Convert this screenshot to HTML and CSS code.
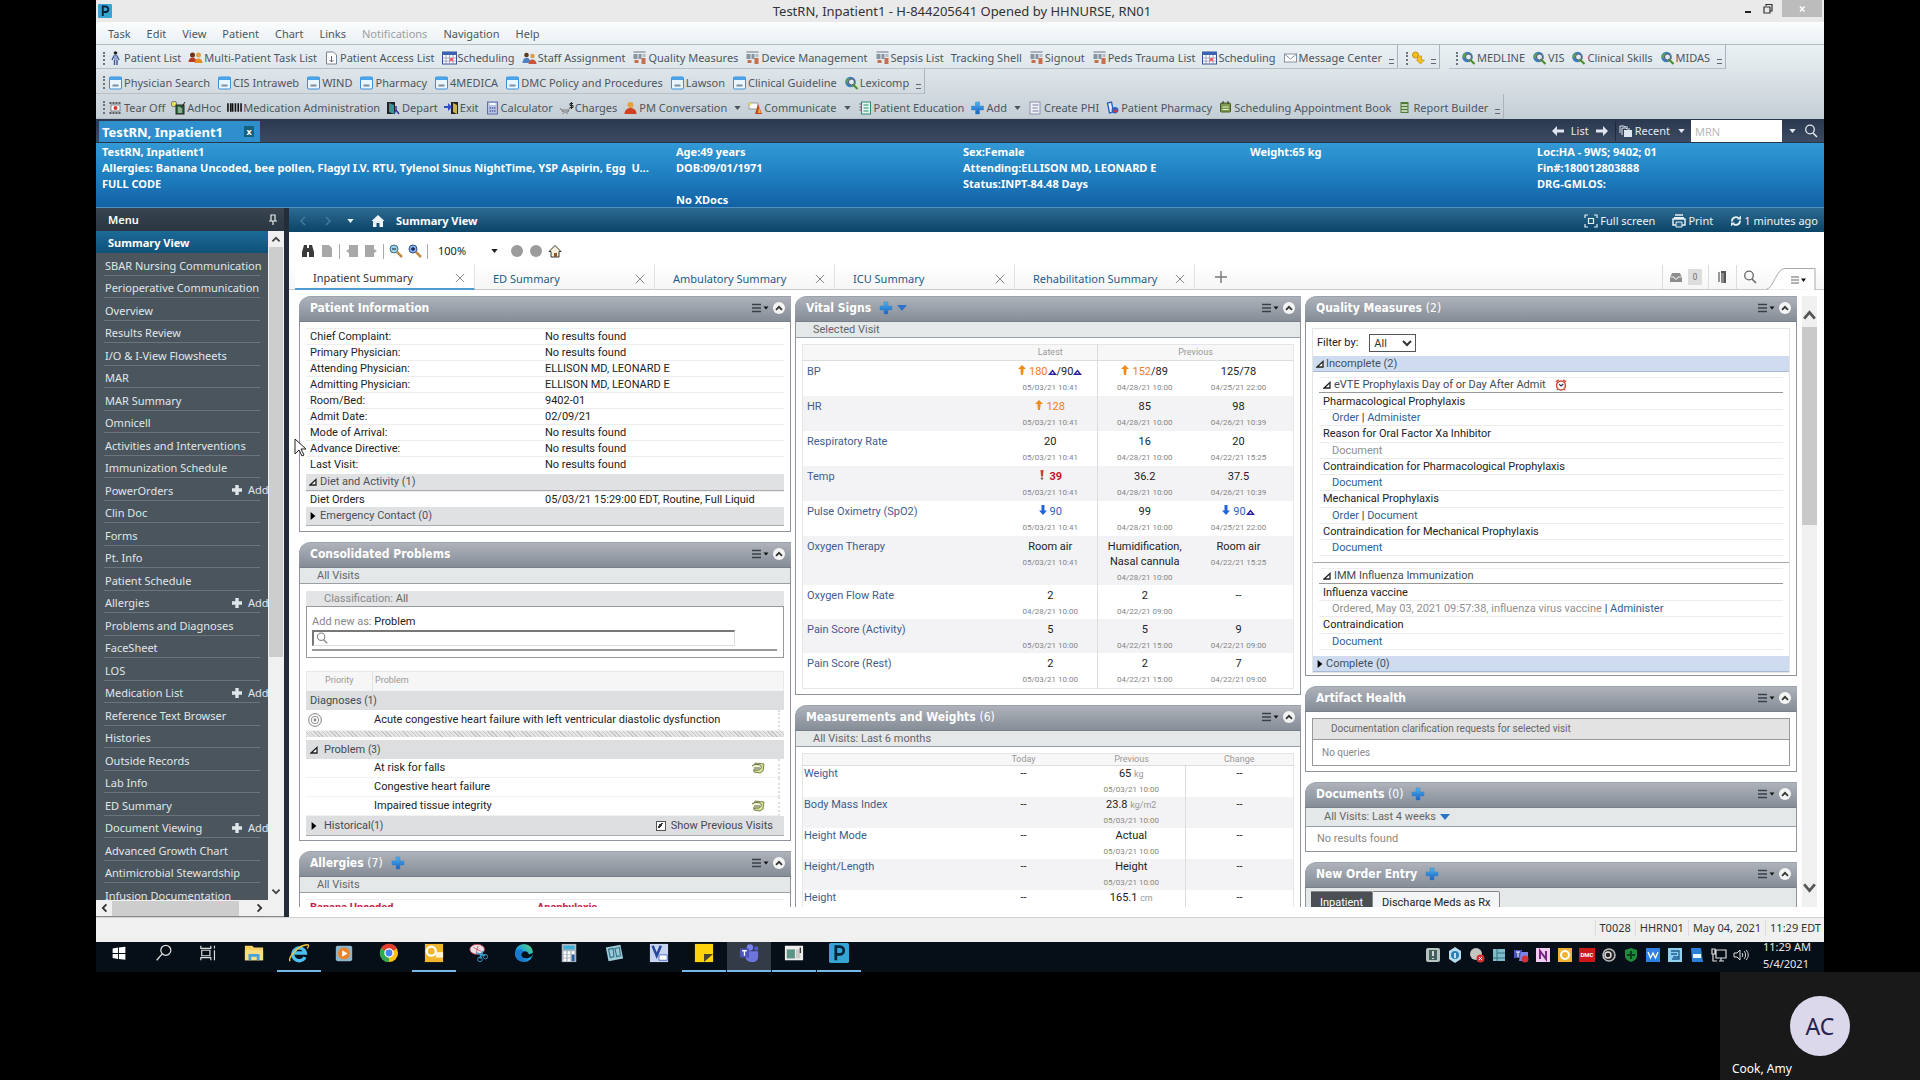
FILE: index.html
```html
<!DOCTYPE html>
<html lang="en">
<head>
<meta charset="utf-8">
<title>TestRN, Inpatient1</title>
<link rel="stylesheet" href="styles.css">
</head>
<body>
<svg class="defs" aria-hidden="true">
  <defs>
    <linearGradient id="g-blue" x1="0" y1="0" x2="0" y2="1"><stop offset="0" stop-color="#4db4f0"/><stop offset="1" stop-color="#1a5fc0"/></linearGradient>
    <linearGradient id="g-edge" x1="0" y1="1" x2="1" y2="0"><stop offset="0" stop-color="#0d5ab8"/><stop offset=".5" stop-color="#1fa3dc"/><stop offset="1" stop-color="#5fdc6a"/></linearGradient>
  </defs>
  <symbol id="menu" viewBox="0 0 18 12"><path d="M1 2.500h9M1 6h9M1 9.500h9" stroke="#3b4048" stroke-width="1.300"/><path d="M12.500 4.500h5l-2.500 3z" fill="#111"/></symbol>
  <symbol id="up" viewBox="0 0 12 12"><circle cx="6" cy="6" r="6" fill="#f4f4f4"/><path d="M3 7.800l3-3 3 3" fill="none" stroke="#333" stroke-width="1.800"/></symbol>
  <symbol id="plus" viewBox="0 0 14 14"><path d="M5 1h4v4h4v4H9v4H5V9H1V5h4z" fill="url(#g-blue)" stroke="#3a85c8" stroke-width=".5"/></symbol>
  <symbol id="plusw" viewBox="0 0 12 12"><path d="M4.300 1h3.400v3.300H11v3.400H7.700V11H4.300V7.700H1V4.300h3.300z" fill="#dfe5e8"/></symbol>
  <symbol id="down" viewBox="0 0 10 6"><path d="M0 0h10L5 6z" fill="#2b75c9"/></symbol>
  <symbol id="tri" viewBox="0 0 8 5"><path d="M0 0h8L4 5z" fill="currentColor"/></symbol>
  <symbol id="open" viewBox="0 0 8 8"><path d="M1 7h6V1.500z" fill="#fff" stroke="#222" stroke-width="1.300"/></symbol>
  <symbol id="shut" viewBox="0 0 8 10"><path d="M1 0l6 5-6 5z" fill="#000"/></symbol>
  <symbol id="x" viewBox="0 0 12 12"><path d="M1 1l10 10M11 1L1 11" stroke="#8a8a8a" stroke-width="1.200"/></symbol>
  <symbol id="page" viewBox="0 0 14 14"><path d="M2 1h7l3 3v9H2z" fill="#a8a8a8"/></symbol>
  <symbol id="lens" viewBox="0 0 14 14"><circle cx="6" cy="5.500" r="4.300" fill="none" stroke="currentColor" stroke-width="1.300"/><path d="M9 9l4 4" stroke="currentColor" stroke-width="1.600"/></symbol>
  <symbol id="win" viewBox="0 0 14 14"><rect x="1" y="1" width="12" height="12" rx="1" fill="#eaf5fd" stroke="#3a8fd8"/><path d="M1 1h12v3H1z" fill="#4aa3e8"/><path d="M4 9.500h6" stroke="#7d8fa5" stroke-width="2"/></symbol>
  <symbol id="globe" viewBox="0 0 14 14"><circle cx="6" cy="6" r="5.300" fill="#3f7fbf"/><path d="M2 3c2-2 4 0 3 2s-3 2-4 2zM7 8c2-2 4-2 4-1s-2 4-4 4z" fill="#5aa548"/><circle cx="7" cy="6" r="3" fill="#dceaf5" stroke="#556"/><path d="M9 9l4 4" stroke="#4a8a2a" stroke-width="2"/></symbol>
  <symbol id="person" viewBox="0 0 14 14"><circle cx="7" cy="2" r="1.800" fill="#222"/><path d="M3.500 9l2-4h3l2 4M6 9v5M8.500 9v5" stroke="#445a94" stroke-width="1.500" fill="none"/><path d="M5.500 5h3v4h-3z" fill="#93a6cf"/></symbol>
  <symbol id="people" viewBox="0 0 14 14"><circle cx="4" cy="4" r="2.500" fill="#6b3418"/><path d="M0 11c0-6 8-6 8 0z" fill="#b93c27"/><circle cx="10" cy="4" r="2.500" fill="#e4a247"/><path d="M6 12c0-6 8-6 8 0z" fill="#e88b20"/></symbol>
  <symbol id="staff" viewBox="0 0 14 14"><circle cx="4" cy="4" r="2.300" fill="#5b3a20"/><path d="M0 12c0-7 8-7 8 0z" fill="#4f82c0"/><circle cx="10" cy="5" r="2.200" fill="#d79a50"/><path d="M6 13c0-6 8-6 8 0z" fill="#c9543a"/></symbol>
  <symbol id="access" viewBox="0 0 14 14"><path d="M2 1h7l3 3v9H2z" fill="#fff" stroke="#7a8290"/><path d="M7 5v6M5 9l2 2 2-2" stroke="#667" fill="none"/></symbol>
  <symbol id="cal" viewBox="0 0 15 14"><rect x=".5" y="1" width="14" height="12" fill="#fff" stroke="#36518f"/><path d="M0 1h15v3H0z" fill="#3a62b5"/><path d="M1 7h13M1 10h13M4 4v9M7.500 4v9M11 4v9" stroke="#8894b4" stroke-width=".8"/><path d="M8 7h3v3H8z" fill="#e06c5a"/></symbol>
  <symbol id="board" viewBox="0 0 14 14"><path d="M1 0h12v2H1z" fill="#a9b2bd"/><path d="M1 3h4v5H1zM6 3h3v5H6z" fill="#8a949f"/><path d="M10 3h3v3h-3z" fill="#b4bcc4"/><path d="M2 9h4v3H2zM9 7h4v6H9z" fill="#c46f52"/></symbol>
  <symbol id="mail" viewBox="0 0 14 14"><rect x="1" y="3" width="12" height="8" fill="#fff" stroke="#8790a0"/><path d="M1 3l6 5 6-5" fill="none" stroke="#8790a0"/></symbol>
  <symbol id="link" viewBox="0 0 14 14"><circle cx="4" cy="4" r="3" fill="#f3c11d" stroke="#c48e10"/><path d="M6 5h4v4h3l-4 4-4-4h1z" fill="#f3c11d" stroke="#c48e10" stroke-width=".7"/></symbol>
  <symbol id="tear" viewBox="0 0 14 14"><path d="M1 2h12M1 12h12" stroke="#333" stroke-width="1.500" stroke-dasharray="2 1"/><rect x="2.500" y="4" width="9" height="6" fill="#fff" stroke="#555" stroke-width=".7"/><circle cx="7" cy="7" r="2" fill="#d33"/></symbol>
  <symbol id="adhoc" viewBox="0 0 15 14"><circle cx="3" cy="3" r="2.800" fill="#e9e34e" stroke="#777"/><rect x="5" y="4" width="8" height="9" fill="#2e6b3e" stroke="#222"/><path d="M7 7h4M7 9h4M7 11h4" stroke="#e8f0e0"/><path d="M14 1l-4 6" stroke="#222"/></symbol>
  <symbol id="bars" viewBox="0 0 16 12"><path d="M1 1v9M4 1v9M6 1v9M9 1v9M12 1v9M15 1v9" stroke="#111" stroke-width="1.700"/></symbol>
  <symbol id="door" viewBox="0 0 15 14"><path d="M1 1h8v12H1z" fill="#222"/><path d="M3 2l5 2v9l-5-2z" fill="#2f9a8e"/><path d="M10 5v4l3 4M10 9l-2 4" stroke="#2d3f9a" stroke-width="1.500" fill="none"/></symbol>
  <symbol id="exit" viewBox="0 0 15 14"><path d="M7 1h7v12H7z" fill="#222"/><path d="M9 2l4 2v9l-4-2z" fill="#c8b450"/><path d="M0 5h4V2l4 4-4 4V7H0z" fill="#2c50c0"/></symbol>
  <symbol id="calc" viewBox="0 0 14 14"><rect x="2" y="1" width="10" height="12" fill="#b9c3e2" stroke="#5f6ea5"/><path d="M4 3h6" stroke="#fff" stroke-width="2"/><path d="M4 7h6M4 10h6" stroke="#5666a8" stroke-width="1.500" stroke-dasharray="1.500 .8"/></symbol>
  <symbol id="cart" viewBox="0 0 15 14"><path d="M1 7l3 4h5l2-5M4 12v1M8 12v1M3 9h6" stroke="#777" fill="none"/><path d="M14 2.500h-3v2h3v2h-3M12.500 1v7" stroke="#222" fill="none"/></symbol>
  <symbol id="pm" viewBox="0 0 14 14"><circle cx="7" cy="4" r="3" fill="#eb9f3c"/><path d="M1 13c0-8 12-8 12 0z" fill="#d23f22"/></symbol>
  <symbol id="comm" viewBox="0 0 15 14"><path d="M1 2h9v6H1z" fill="#fff" stroke="#999"/><path d="M1 1l3 2-3 2z" fill="#e9d84e"/><path d="M10 3l4 10H7z" fill="#c0451f"/><path d="M11 6l2 6h-3z" fill="#f0b13c"/></symbol>
  <symbol id="edu" viewBox="0 0 14 14"><rect x="3" y="1" width="9" height="12" fill="#e6f3ec" stroke="#2d8a76"/><path d="M5 4h5M5 7h5M5 10h5" stroke="#2d8a76"/><path d="M1 3h2M1 6h2M1 9h2" stroke="#555"/></symbol>
  <symbol id="phi" viewBox="0 0 14 14"><rect x="1.500" y="1" width="10" height="12" fill="#eef0f6" stroke="#8b90a8"/><path d="M4 4h6M4 7h5M4 10h6" stroke="#777fa0"/></symbol>
  <symbol id="rx" viewBox="0 0 14 14"><path d="M2 2l4-1 2 10-4 1z" fill="#e8eefa" stroke="#2b62c4" stroke-width="1.400"/><path d="M6 9c0-4 7-4 7 0s-7 5-7 0z" fill="#2b62c4"/><circle cx="10" cy="10" r="1.500" fill="#d33"/></symbol>
  <symbol id="book" viewBox="0 0 14 14"><rect x="2" y="2" width="10" height="9" rx="1" fill="#7f9a4e" stroke="#465c28"/><path d="M4 6h6M4 8.500h6" stroke="#e2ecc8"/><path d="M4.500 0v3M9.500 0v3" stroke="#333"/></symbol>
  <symbol id="report" viewBox="0 0 14 14"><path d="M3 1h8v11H3z" fill="#4e7a35"/><path d="M4 4h6M4 7h6M4 10h6" stroke="#e6f0d8" stroke-width="1.300"/></symbol>
  <symbol id="note" viewBox="0 0 14 12"><path d="M4 1l9 1-1 7-3 2-6-1z" fill="#dce59a" stroke="#7c8448"/><path d="M1 4c2-2 8-2 9 0s-1 4-3 4H2" fill="#f4f6dc" stroke="#5a6038"/><path d="M3 6h6" stroke="#5a6038"/></symbol>
  <symbol id="dx" viewBox="0 0 15 15"><circle cx="7.500" cy="7.500" r="6.800" fill="none" stroke="#777"/><circle cx="7.500" cy="7.500" r="4" fill="none" stroke="#888"/><circle cx="7.500" cy="7.500" r="1.600" fill="#888"/></symbol>
  <symbol id="clock" viewBox="0 0 13 13"><circle cx="6.500" cy="7" r="4.800" fill="#fff" stroke="#d5493b" stroke-width="1.600"/><path d="M1 3l3-2M12 3L9 1M2 12l1-1M11 12l-1-1" stroke="#d5493b" stroke-width="1.600"/><path d="M4.500 5.500l2 2 2.500-2" fill="none" stroke="#235" stroke-width="1.300"/></symbol>
  <symbol id="ahi" viewBox="0 0 8 10"><path d="M4 0l4 4H5.500v1.500L5 10H3l-.5-4.500V4H0z" fill="#f08a18"/></symbol>
  <symbol id="alo" viewBox="0 0 8 10"><path d="M4 10L8 5.500H5.500V0h-3v5.500H0z" fill="#2465d6"/></symbol>
  <symbol id="bang" viewBox="0 0 6 10"><path d="M1.500 0h3L4 6.500H2z" fill="#c8442c"/><circle cx="3" cy="8.500" r="1.300" fill="#8c6a60"/></symbol>
  <symbol id="delta" viewBox="0 0 9 6"><path d="M1.500 5.200h6L4.500 1.500z" fill="none" stroke="#2a1fa8" stroke-width="1.400"/></symbol>
  <symbol id="home" viewBox="0 0 14 14"><path d="M7 1l6.500 6H12v6H8.500V9h-3v4H2V7H.5z" fill="currentColor"/></symbol>
  <symbol id="p" viewBox="0 0 22 22"><rect width="22" height="22" rx="2" fill="#35a5d3"/><path d="M7.500 19V4h4.500a4.200 4.200 0 010 8.500H7.500" fill="none" stroke="#06233c" stroke-width="3"/></symbol>
</svg>

<div class="app">
  <header class="titlebar">
    <svg class="i14"><use href="#p"/></svg>
    <h1>TestRN, Inpatient1 - H-844205641 Opened by HHNURSE, RN01</h1>
    <div class="winbtns">
      <button aria-label="Minimize"><svg class="i12" viewBox="0 0 12 12"><path d="M3 9h6" stroke="#222" stroke-width="2"/></svg></button>
      <button aria-label="Restore"><svg class="i12" viewBox="0 0 12 12"><path d="M4 3V1.500h6V8H8.500M2 4h6v6H2z" fill="none" stroke="#333" stroke-width="1.200"/></svg></button>
      <button class="close" aria-label="Close"><svg class="i12" viewBox="0 0 12 12"><path d="M4 3.500l4.500 5M8.500 3.500l-4.500 5" stroke="#fff" stroke-width="1.600"/></svg></button>
    </div>
  </header>

  <div class="chrome">
    <nav class="menubar"><a href="#">Task</a><a href="#">Edit</a><a href="#">View</a><a href="#">Patient</a><a href="#">Chart</a><a href="#">Links</a><a href="#" class="off">Notifications</a><a href="#">Navigation</a><a href="#">Help</a></nav>
    <div class="bars">
      <div class="tb">
        <div class="grp"><button><svg><use href="#person"/></svg>Patient List</button><button><svg><use href="#people"/></svg>Multi-Patient Task List</button><button><svg><use href="#access"/></svg>Patient Access List</button><button><svg><use href="#cal"/></svg>Scheduling</button><button><svg><use href="#staff"/></svg>Staff Assignment</button><button><svg><use href="#board"/></svg>Quality Measures</button><button><svg><use href="#board"/></svg>Device Management</button><button><svg><use href="#board"/></svg>Sepsis List</button><button>Tracking Shell</button><button><svg><use href="#board"/></svg>Signout</button><button><svg><use href="#board"/></svg>Peds Trauma List</button><button><svg><use href="#cal"/></svg>Scheduling</button><button><svg><use href="#mail"/></svg>Message Center</button></div>
        <div class="grp solo"><button aria-label="Link"><svg><use href="#link"/></svg></button></div>
        <div class="grp web"><button><svg><use href="#globe"/></svg>MEDLINE</button><button><svg><use href="#globe"/></svg>VIS</button><button><svg><use href="#globe"/></svg>Clinical Skills</button><button><svg><use href="#globe"/></svg>MIDAS</button></div>
      </div>
      <div class="tb">
        <div class="grp"><button><svg><use href="#win"/></svg>Physician Search</button><button><svg><use href="#win"/></svg>CIS Intraweb</button><button><svg><use href="#win"/></svg>WIND</button><button><svg><use href="#win"/></svg>Pharmacy</button><button><svg><use href="#win"/></svg>4MEDICA</button><button><svg><use href="#win"/></svg>DMC Policy and Procedures</button><button><svg><use href="#win"/></svg>Lawson</button><button><svg><use href="#win"/></svg>Clinical Guideline</button><button><svg><use href="#globe"/></svg>Lexicomp</button></div>
      </div>
      <div class="tb">
        <div class="grp tight"><button><svg><use href="#tear"/></svg>Tear Off</button><button><svg><use href="#adhoc"/></svg>AdHoc</button><button><svg><use href="#bars"/></svg>Medication Administration</button><button><svg><use href="#door"/></svg>Depart</button><button><svg><use href="#exit"/></svg>Exit</button><button><svg><use href="#calc"/></svg>Calculator</button><button><svg><use href="#cart"/></svg>Charges</button><button><svg><use href="#pm"/></svg>PM Conversation<svg class="caret"><use href="#tri"/></svg></button><button><svg><use href="#comm"/></svg>Communicate<svg class="caret"><use href="#tri"/></svg></button><button><svg><use href="#edu"/></svg>Patient Education</button><button><svg><use href="#plus"/></svg>Add<svg class="caret"><use href="#tri"/></svg></button><button><svg><use href="#phi"/></svg>Create PHI</button><button><svg><use href="#rx"/></svg>Patient Pharmacy</button><button><svg><use href="#book"/></svg>Scheduling Appointment Book</button><button><svg><use href="#report"/></svg>Report Builder</button></div>
      </div>
    </div>
  </div>

  <div class="charts">
    <div class="charttab"><span>TestRN, Inpatient1</span><button aria-label="Close chart">x</button></div>
    <div class="chartnav">
      <svg class="i14" viewBox="0 0 14 14"><path d="M1 7l5-5v3.500h7v3H6V12z" fill="#dfe6f0"/></svg><a href="#">List</a><svg class="i14" viewBox="0 0 14 14"><path d="M13 7L8 2v3.500H1v3h7V12z" fill="#dfe6f0"/></svg>
      <button class="recent"><svg class="i14" viewBox="0 0 14 14"><path d="M1 9V2h4l1 1h3M3 11V4h4l1 1h3" fill="none" stroke="#dfe6f0"/><path d="M5 6h8v7H5z" fill="#dfe6f0"/></svg>Recent<svg class="caret"><use href="#tri"/></svg></button>
      <input type="text" placeholder="MRN" aria-label="MRN">
      <svg class="caret"><use href="#tri"/></svg><svg class="i14"><use href="#lens"/></svg>
    </div>
  </div>

  <section class="banner">
    <div><p>TestRN, Inpatient1</p><p class="alg">Allergies: Banana Uncoded, bee pollen, Flagyl I.V. RTU, Tylenol Sinus NightTime, YSP Aspirin, Egg&nbsp; U...</p><p>FULL CODE</p></div>
    <div><p>Age:49 years</p><p>DOB:09/01/1971</p><p>&nbsp;</p><p>No XDocs</p></div>
    <div><p>Sex:Female</p><p>Attending:ELLISON MD, LEONARD E</p><p>Status:INPT-84.48 Days</p></div>
    <div><p>Weight:65 kg</p></div>
    <div><p>Loc:HA - 9WS; 9402; 01</p><p>Fin#:180012803888</p><p>DRG-GMLOS:</p></div>
  </section>

  <main class="main">
    <aside class="side">
      <h2>Menu<svg class="i12" viewBox="0 0 12 12"><path d="M4 1h4v6H4zM2 7h8M6 7v4" fill="none" stroke="#e8ecf0" stroke-width="1.200"/></svg></h2>
      <div class="sidebody">
        <ul>
          <li class="on"><a href="#">Summary View</a></li>
          <li><a href="#">SBAR Nursing Communication</a></li>
          <li><a href="#">Perioperative Communication</a></li>
          <li><a href="#">Overview</a></li>
          <li><a href="#">Results Review</a></li>
          <li><a href="#">I/O &amp; I-View Flowsheets</a></li>
          <li><a href="#">MAR</a></li>
          <li><a href="#">MAR Summary</a></li>
          <li><a href="#">Omnicell</a></li>
          <li><a href="#">Activities and Interventions</a></li>
          <li><a href="#">Immunization Schedule</a></li>
          <li><a href="#">PowerOrders</a><button><svg class="i12"><use href="#plusw"/></svg>Add</button></li>
          <li><a href="#">Clin Doc</a></li>
          <li><a href="#">Forms</a></li>
          <li><a href="#">Pt. Info</a></li>
          <li><a href="#">Patient Schedule</a></li>
          <li><a href="#">Allergies</a><button><svg class="i12"><use href="#plusw"/></svg>Add</button></li>
          <li><a href="#">Problems and Diagnoses</a></li>
          <li><a href="#">FaceSheet</a></li>
          <li><a href="#">LOS</a></li>
          <li><a href="#">Medication List</a><button><svg class="i12"><use href="#plusw"/></svg>Add</button></li>
          <li><a href="#">Reference Text Browser</a></li>
          <li><a href="#">Histories</a></li>
          <li><a href="#">Outside Records</a></li>
          <li><a href="#">Lab Info</a></li>
          <li><a href="#">ED Summary</a></li>
          <li><a href="#">Document Viewing</a><button><svg class="i12"><use href="#plusw"/></svg>Add</button></li>
          <li><a href="#">Advanced Growth Chart</a></li>
          <li><a href="#">Antimicrobial Stewardship</a></li>
          <li><a href="#">Infusion Documentation</a></li>
        </ul>
        <div class="vbar"><svg viewBox="0 0 10 10"><path d="M2 7l3-3 3 3" fill="none" stroke="#444" stroke-width="1.500"/></svg><i></i><svg viewBox="0 0 10 10"><path d="M2 3l3 3 3-3" fill="none" stroke="#444" stroke-width="1.500"/></svg></div>
      </div>
      <div class="hbar"><svg viewBox="0 0 10 10"><path d="M7 2L4 5l3 3" fill="none" stroke="#333" stroke-width="1.500"/></svg><i></i><svg viewBox="0 0 10 10"><path d="M3 2l3 3-3 3" fill="none" stroke="#333" stroke-width="1.500"/></svg></div>
    </aside>

    <section class="content">
      <header class="viewbar">
        <svg class="i12" viewBox="0 0 12 12"><path d="M8 2L4 6l4 4" fill="none" stroke="#3f7ba0" stroke-width="1.500"/></svg>
        <svg class="i12" viewBox="0 0 12 12"><path d="M4 2l4 4-4 4" fill="none" stroke="#3f7ba0" stroke-width="1.500"/></svg>
        <svg class="caret"><use href="#tri"/></svg>
        <svg class="i14 hm"><use href="#home"/></svg>
        <h2>Summary View</h2>
        <div class="viewacts">
          <button><svg class="i14" viewBox="0 0 14 14"><path d="M1 4V1h3M10 1h3v3M13 10v3h-3M4 13H1v-3M4.500 4.500h5v5h-5z" fill="none" stroke="#e6f0f5" stroke-width="1.200"/></svg>Full screen</button>
          <button><svg class="i14" viewBox="0 0 14 14"><path d="M3 1h8M1 5h12v6H1z" stroke="#e6f0f5" stroke-width="1.500" fill="none"/><path d="M2 3h10v2H2z" fill="#e6f0f5"/><path d="M4 8h6v5H4z" fill="#2a6488" stroke="#e6f0f5"/></svg>Print</button>
          <button><svg class="i12" viewBox="0 0 12 12"><path d="M2 6.500a4 4 0 016.500-3.500M10 5.500A4 4 0 013.500 9" fill="none" stroke="#e6f0f5" stroke-width="1.800"/><path d="M7 4.500h4V.5zM5 7.500H1v4z" fill="#e6f0f5"/></svg>1 minutes ago</button>
        </div>
      </header>

      <div class="tools">
        <svg class="i14" viewBox="0 0 14 14"><path d="M3 1h3v3h2V1h3l2 7v5H8V8H6v5H1V8z" fill="#3b3b3b"/></svg>
        <svg class="i14"><use href="#page"/></svg><b></b>
        <svg class="i14" viewBox="0 0 14 14"><path d="M4 1h9v12H4V9L1 7l3-2z" fill="#a8a8a8"/></svg>
        <svg class="i14" viewBox="0 0 14 14"><path d="M1 1h9v4l3 2-3 2v4H1z" fill="#a8a8a8"/></svg><b></b>
        <svg class="i14" viewBox="0 0 14 14"><circle cx="5" cy="5" r="4" fill="#9fd0e4" stroke="#38728c"/><path d="M3 5h4" stroke="#123"/><path d="M8 8l5 5" stroke="#c08a4a" stroke-width="2.500"/></svg>
        <svg class="i14" viewBox="0 0 14 14"><circle cx="5" cy="5" r="4" fill="#8ab5e8" stroke="#2c4f94"/><path d="M3 5h4M5 3v4" stroke="#102050" stroke-width="1.300"/><path d="M8 8l5 5" stroke="#c08a4a" stroke-width="2.500"/></svg><b></b>
        <span class="zoom">100%</span><svg class="caret"><use href="#tri"/></svg><b class="last"></b>
        <svg class="i14" viewBox="0 0 14 14"><circle cx="7" cy="7" r="6" fill="#9b9b9b"/></svg>
        <svg class="i14" viewBox="0 0 14 14"><circle cx="7" cy="7" r="6" fill="#9b9b9b"/></svg>
        <svg class="i14" viewBox="0 0 14 14"><path d="M7 1.500L1 7.500h2V13h8V7.500h2z" fill="#f6efdc" stroke="#333"/><path d="M6 9h3v4H6z" fill="#8c5a2a"/></svg>
      </div>

      <nav class="tabs">
        <div class="tab on"><a href="#">Inpatient Summary</a><svg class="i10"><use href="#x"/></svg></div>
        <div class="tab"><a href="#">ED Summary</a><svg class="i10"><use href="#x"/></svg></div>
        <div class="tab"><a href="#">Ambulatory Summary</a><svg class="i10"><use href="#x"/></svg></div>
        <div class="tab"><a href="#">ICU Summary</a><svg class="i10"><use href="#x"/></svg></div>
        <div class="tab"><a href="#">Rehabilitation Summary</a><svg class="i10"><use href="#x"/></svg></div>
        <button class="addtab" aria-label="Add tab"><svg class="i14" viewBox="0 0 14 14"><path d="M7 1v12M1 7h12" stroke="#777" stroke-width="1.400"/></svg></button>
        <div class="tabtools">
          <span class="inbox"><svg class="i14" viewBox="0 0 14 14"><path d="M3 3h8l2 5v4H1V8z" fill="#8d8d8d"/><path d="M2 7h3l1 2h2l1-2h3" fill="none" stroke="#eee"/></svg><em>0</em></span>
          <span><svg class="i14" viewBox="0 0 14 14"><path d="M3 2h2v10H3z" fill="#999"/><path d="M6 1h5v12H9V3H6z" fill="#555"/><path d="M6 3h3v10H6z" fill="#888"/></svg></span>
          <span class="srch"><svg class="i14"><use href="#lens"/></svg></span>
          <svg class="flap" viewBox="0 0 50 22"><path d="M0 21.500c8-1 10-21 19-21h30v21.500" fill="#fff" stroke="#aaa"/><path d="M25 9h8M25 12h8M25 15h8" stroke="#666" stroke-width="1.200"/><path d="M35 10.500h5l-2.500 3.500z" fill="#111"/></svg>
        </div>
      </nav>

      <div class="view">
        <div class="cols">
          <div class="col">
            <article class="panel">
              <h3>Patient Information<span class="ctl"><svg class="mn"><use href="#menu"/></svg><svg class="i12"><use href="#up"/></svg></span></h3>
              <div class="body">
                <table class="info">
                  <tr><th>Chief Complaint:</th><td>No results found</td></tr>
                  <tr><th>Primary Physician:</th><td>No results found</td></tr>
                  <tr><th>Attending Physician:</th><td>ELLISON MD, LEONARD E</td></tr>
                  <tr><th>Admitting Physician:</th><td>ELLISON MD, LEONARD E</td></tr>
                  <tr><th>Room/Bed:</th><td>9402-01</td></tr>
                  <tr><th>Admit Date:</th><td>02/09/21</td></tr>
                  <tr><th>Mode of Arrival:</th><td>No results found</td></tr>
                  <tr><th>Advance Directive:</th><td>No results found</td></tr>
                  <tr><th>Last Visit:</th><td>No results found</td></tr>
                </table>
                <h4 class="sec"><svg class="i8"><use href="#open"/></svg>Diet and Activity (1)</h4>
                <table class="info"><tr><th>Diet Orders</th><td>05/03/21 15:29:00 EDT, Routine, Full Liquid</td></tr></table>
                <h4 class="sec tall"><svg class="i8"><use href="#shut"/></svg>Emergency Contact (0)</h4>
              </div>
            </article>

            <article class="panel">
              <h3>Consolidated Problems<span class="ctl"><svg class="mn"><use href="#menu"/></svg><svg class="i12"><use href="#up"/></svg></span></h3>
              <p class="sub">All Visits</p>
              <div class="body probs">
                <p class="class">Classification: <span>All</span></p>
                <div class="addbox">
                  <label for="prob">Add new as: <span>Problem</span></label>
                  <div class="field"><svg class="i12"><use href="#lens"/></svg><input id="prob" type="text"></div>
                </div>
                <div class="phead"><span>Priority</span><span>Problem</span></div>
                <h4 class="bar">Diagnoses <small>(1)</small></h4>
                <div class="prow dxrow"><svg class="i14"><use href="#dx"/></svg><span>Acute congestive heart failure with left ventricular diastolic dysfunction</span></div>
                <div class="hatch"></div>
                <h4 class="bar pr"><svg class="i8"><use href="#open"/></svg>Problem <small>(3)</small></h4>
                <div class="prow"><span>At risk for falls</span><svg class="nt"><use href="#note"/></svg></div>
                <div class="prow"><span>Congestive heart failure</span></div>
                <div class="prow"><span>Impaired tissue integrity</span><svg class="nt"><use href="#note"/></svg></div>
                <h4 class="bar pr hist"><svg class="i8"><use href="#shut"/></svg>Historical<small>(1)</small><label><input type="checkbox" checked>Show Previous Visits</label></h4>
              </div>
            </article>

            <article class="panel">
              <h3>Allergies <i>(7)</i><svg class="i14 pl"><use href="#plus"/></svg><span class="ctl"><svg class="mn"><use href="#menu"/></svg><svg class="i12"><use href="#up"/></svg></span></h3>
              <p class="sub">All Visits</p>
              <div class="body"><table class="info alrt"><tr><th>Banana Uncoded</th><td>Anaphylaxis</td></tr></table></div>
            </article>
          </div>

          <div class="col">
            <article class="panel">
              <h3>Vital Signs<svg class="i14 pl"><use href="#plus"/></svg><svg class="dn"><use href="#down"/></svg><span class="ctl"><svg class="mn"><use href="#menu"/></svg><svg class="i12"><use href="#up"/></svg></span></h3>
              <p class="sub">Selected Visit</p>
              <div class="body">
                <table class="grid vit">
                  <colgroup><col><col class="c1"><col class="c2"><col class="c2"><col class="c3"></colgroup>
                  <thead><tr><th></th><th>Latest</th><th colspan="3" class="ln">Previous</th></tr></thead>
                  <tbody>
                    <tr><th><a href="#">BP</a></th><td><svg class="ar"><use href="#ahi"/></svg><span class="hi">180</span><svg class="dl"><use href="#delta"/></svg>/90<svg class="dl"><use href="#delta"/></svg><time>05/03/21 10:41</time></td><td class="ln"><svg class="ar"><use href="#ahi"/></svg><span class="hi">152</span>/89<time>04/28/21 10:00</time></td><td>125/78<time>04/25/21 22:00</time></td><td></td></tr>
                    <tr><th><a href="#">HR</a></th><td><svg class="ar"><use href="#ahi"/></svg><span class="hi">128</span><time>05/03/21 10:41</time></td><td class="ln">85<time>04/28/21 10:00</time></td><td>98<time>04/26/21 10:39</time></td><td></td></tr>
                    <tr><th><a href="#">Respiratory Rate</a></th><td>20<time>05/03/21 10:41</time></td><td class="ln">16<time>04/28/21 10:00</time></td><td>20<time>04/22/21 15:25</time></td><td></td></tr>
                    <tr><th><a href="#">Temp</a></th><td><svg class="ar"><use href="#bang"/></svg><span class="crit">39</span><time>05/03/21 10:41</time></td><td class="ln">36.2<time>04/28/21 10:00</time></td><td>37.5<time>04/26/21 10:39</time></td><td></td></tr>
                    <tr><th><a href="#">Pulse Oximetry (SpO2)</a></th><td><svg class="ar"><use href="#alo"/></svg><span class="lo">90</span><time>05/03/21 10:41</time></td><td class="ln">99<time>04/28/21 10:00</time></td><td><svg class="ar"><use href="#alo"/></svg><span class="lo">90</span><svg class="dl"><use href="#delta"/></svg><time>04/25/21 22:00</time></td><td></td></tr>
                    <tr><th><a href="#">Oxygen Therapy</a></th><td>Room air<time>05/03/21 10:41</time></td><td class="ln">Humidification,<br>Nasal cannula<time>04/28/21 10:00</time></td><td>Room air<time>04/22/21 15:25</time></td><td></td></tr>
                    <tr><th><a href="#">Oxygen Flow Rate</a></th><td>2<time>04/28/21 10:00</time></td><td class="ln">2<time>04/22/21 09:00</time></td><td>--</td><td></td></tr>
                    <tr><th><a href="#">Pain Score (Activity)</a></th><td>5<time>05/03/21 10:00</time></td><td class="ln">5<time>04/22/21 15:00</time></td><td>9<time>04/22/21 09:00</time></td><td></td></tr>
                    <tr><th><a href="#">Pain Score (Rest)</a></th><td>2<time>05/03/21 10:00</time></td><td class="ln">2<time>04/22/21 15:00</time></td><td>7<time>04/22/21 09:00</time></td><td></td></tr>
                  </tbody>
                </table>
              </div>
            </article>

            <article class="panel">
              <h3>Measurements and Weights <i>(6)</i><span class="ctl"><svg class="mn"><use href="#menu"/></svg><svg class="i12"><use href="#up"/></svg></span></h3>
              <p class="sub">All Visits: Last 6 months</p>
              <div class="body">
                <table class="grid meas">
                  <colgroup><col><col class="c4"><col class="c4"><col class="c4"></colgroup>
                  <thead><tr><th></th><th>Today</th><th>Previous</th><th>Change</th></tr></thead>
                  <tbody>
                    <tr><th><a href="#">Weight</a></th><td>--</td><td>65 <small>kg</small><time>05/03/21 10:00</time></td><td class="ln">--</td></tr>
                    <tr><th><a href="#">Body Mass Index</a></th><td>--</td><td>23.8 <small>kg/m2</small><time>05/03/21 10:00</time></td><td class="ln">--</td></tr>
                    <tr><th><a href="#">Height Mode</a></th><td>--</td><td>Actual<time>05/03/21 10:00</time></td><td class="ln">--</td></tr>
                    <tr><th><a href="#">Height/Length</a></th><td>--</td><td>Height<time>05/03/21 10:00</time></td><td class="ln">--</td></tr>
                    <tr><th><a href="#">Height</a></th><td>--</td><td>165.1 <small>cm</small><time>05/03/21 10:00</time></td><td class="ln">--</td></tr>
                  </tbody>
                </table>
              </div>
            </article>
          </div>

          <div class="col">
            <article class="panel">
              <h3>Quality Measures <i>(2)</i><span class="ctl"><svg class="mn"><use href="#menu"/></svg><svg class="i12"><use href="#up"/></svg></span></h3>
              <div class="body qbody">
                <div class="qm">
                  <p class="filter"><label for="flt">Filter by:</label><select id="flt"><option>All</option></select></p>
                  <h4 class="blue"><svg class="i8"><use href="#open"/></svg>Incomplete (2)</h4>
                  <div class="qsec">
                    <h5><svg class="i8"><use href="#open"/></svg>eVTE Prophylaxis Day of or Day After Admit<svg class="i12 ck"><use href="#clock"/></svg></h5>
                    <p>Pharmacological Prophylaxis</p>
                    <p class="act"><a href="#">Order</a> | <a href="#">Administer</a></p>
                    <p>Reason for Oral Factor Xa Inhibitor</p>
                    <p class="act dim">Document</p>
                    <p>Contraindication for Pharmacological Prophylaxis</p>
                    <p class="act"><a href="#">Document</a></p>
                    <p>Mechanical Prophylaxis</p>
                    <p class="act"><a href="#">Order</a> | <a href="#">Document</a></p>
                    <p>Contraindication for Mechanical Prophylaxis</p>
                    <p class="act"><a href="#">Document</a></p>
                  </div>
                  <div class="qsec two">
                    <h5><svg class="i8"><use href="#open"/></svg>IMM Influenza Immunization</h5>
                    <p>Influenza vaccine</p>
                    <p class="act"><span class="dim">Ordered, May 03, 2021 09:57:38, influenza virus vaccine</span> | <a href="#">Administer</a></p>
                    <p>Contraindication</p>
                    <p class="act"><a href="#">Document</a></p>
                  </div>
                  <h4 class="blue"><svg class="i8"><use href="#shut"/></svg>Complete (0)</h4>
                </div>
              </div>
            </article>

            <article class="panel">
              <h3>Artifact Health<span class="ctl"><svg class="mn"><use href="#menu"/></svg><svg class="i12"><use href="#up"/></svg></span></h3>
              <div class="body">
                <div class="art"><h4>Documentation clarification requests for selected visit</h4><p>No queries</p></div>
              </div>
            </article>

            <article class="panel">
              <h3>Documents <i>(0)</i><svg class="i14 pl"><use href="#plus"/></svg><span class="ctl"><svg class="mn"><use href="#menu"/></svg><svg class="i12"><use href="#up"/></svg></span></h3>
              <p class="sub big">All Visits: Last 4 weeks<svg class="dn"><use href="#down"/></svg></p>
              <p class="none">No results found</p>
            </article>

            <article class="panel">
              <h3>New Order Entry<svg class="i14 pl"><use href="#plus"/></svg><span class="ctl"><svg class="mn"><use href="#menu"/></svg><svg class="i12"><use href="#up"/></svg></span></h3>
              <div class="otabs"><button class="on">Inpatient</button><button>Discharge Meds as Rx</button></div>
            </article>
          </div>
        </div>
        <div class="mainbar"><svg viewBox="0 0 14 14"><path d="M2 10l5-6 5 6" fill="none" stroke="#555" stroke-width="2.500"/></svg><i></i><svg viewBox="0 0 14 14"><path d="M2 4l5 6 5-6" fill="none" stroke="#555" stroke-width="2.500"/></svg></div>
      </div>
    </section>
  </main>

  <footer class="status"><span>T0028</span><span>HHRN01</span><span>May 04, 2021</span><span>11:29 EDT</span></footer>

  <nav class="taskbar">
    <div class="apps">
      <button aria-label="Start"><svg viewBox="0 0 22 22"><path d="M4 6l6-1v6H4zM11 5l7-1v7h-7zM4 12h6v5.500l-6-1zM11 12h7v6.500l-7-1z" fill="#fff"/></svg></button>
      <button aria-label="Search"><svg viewBox="0 0 22 22"><circle cx="13" cy="8" r="5.500" fill="none" stroke="#ddd" stroke-width="1.400"/><path d="M9 12l-6 7" stroke="#ddd" stroke-width="1.500"/></svg></button>
      <button aria-label="Task view"><svg viewBox="0 0 22 22"><path d="M2 3v3h11V3M3 8h9v6H3zM2 19v-3h11v3M17 3v3M17 8v11" fill="none" stroke="#ddd" stroke-width="1.300"/></svg></button>
      <button aria-label="Files"><svg viewBox="0 0 22 22"><path d="M1 3h8l2 2h10v14H1z" fill="#f4cf62"/><path d="M1 8h20v11H1z" fill="#f9dd85"/><path d="M5 19v-7h12v7h-3v-4H8v4z" fill="#45a0dc"/></svg></button>
      <button class="run" aria-label="Internet Explorer"><svg viewBox="0 0 22 22"><path d="M17.500 15.500a7 7 0 11.500-4.500H6" fill="none" stroke="#4ac0f2" stroke-width="3.600"/><path d="M1 20C-1 15 12 1 21 2c1 1 0 3-1 4" fill="none" stroke="#f5c83a" stroke-width="1.500"/></svg></button>
      <button aria-label="Media"><svg viewBox="0 0 22 22"><rect x="2" y="3" width="18" height="17" rx="2" fill="#8fb6c8"/><circle cx="11" cy="11.500" r="6.500" fill="#ef8228"/><path d="M9 8l6 3.500L9 15z" fill="#fff"/></svg></button>
      <button aria-label="Chrome"><svg viewBox="0 0 22 22"><circle cx="11" cy="11" r="10" fill="#fbc116"/><path d="M11 11L2.300 6A10 10 0 0119.700 6z" fill="#e33b2e"/><path d="M11 11L2.300 6A10 10 0 0011 21z" fill="#2da94f"/><circle cx="11" cy="11" r="4.500" fill="#4285f4" stroke="#fff" stroke-width="1.500"/></svg></button>
      <button class="run" aria-label="Outlook"><svg viewBox="0 0 22 22"><path d="M1 1h20v20H1z" fill="#f1b62e"/><circle cx="8" cy="9" r="5" fill="none" stroke="#fff" stroke-width="2.500"/><path d="M13 10h8v6h-8z" fill="#fff5d0"/></svg></button>
      <button aria-label="Snip"><svg viewBox="0 0 22 22"><ellipse cx="9" cy="7" rx="8" ry="5.500" fill="#e9e1e6" stroke="#c04050"/><path d="M5 5l8 4M10 3l-2 8" stroke="#c04050" stroke-width=".8"/><path d="M8 11l10 3M12 17l3-8" stroke="#3e9cc8" stroke-width="2"/><circle cx="12" cy="18" r="2.500" fill="none" stroke="#3e9cc8"/><circle cx="18" cy="15" r="2.500" fill="none" stroke="#3e9cc8"/></svg></button>
      <button aria-label="Edge"><svg viewBox="0 0 22 22"><circle cx="11" cy="11" r="10" fill="url(#g-edge)"/><path d="M8 13c0-5 7-5 8-1 2 1 5-1 5-2 1 8-13 9-13 3z" fill="#06101a"/><path d="M1 12c2-6 9-6 10-2-4 0-5 6 1 9-6 3-11-2-11-7z" fill="#1879cf"/></svg></button>
      <button aria-label="Calculator"><svg viewBox="0 0 22 22"><rect x="3" y="1" width="16" height="20" fill="#a9b4bd"/><path d="M5 3h12v4H5z" fill="#38b0d8"/><path d="M5 9h3v3H5zM9.500 9h3v3h-3zM5 13h3v3H5zM9.500 13h3v3h-3zM5 17h3v3H5zM9.500 17h3v3h-3zM14 9h3v3h-3z" fill="#fff"/><path d="M14 13h3v7h-3z" fill="#2a5fa8"/></svg></button>
      <button aria-label="Notebook"><svg viewBox="0 0 22 22"><path d="M2 5l16-3 3 15-16 3z" fill="#9ccbd6"/><path d="M5 7l5-1 1 9-4 1zM12 6l5-1 1 9-4 1z" fill="none" stroke="#2f6f88" stroke-width="1.200"/></svg></button>
      <button aria-label="Visio"><svg viewBox="0 0 22 22"><path d="M1 1h20v20H1z" fill="#c7d3f0"/><path d="M4 3l4.500 11L13 3" fill="none" stroke="#26479c" stroke-width="2.800"/><path d="M11 13h9v6h-9z" fill="#fff" stroke="#4a6ac0"/></svg></button>
      <button class="run" aria-label="Sticky Notes"><svg viewBox="0 0 22 22"><path d="M1 1h20v20H1z" fill="#fdd40a"/><path d="M11 21v-9h10z" fill="#4a4435"/></svg></button>
      <button class="run cur" aria-label="Teams"><svg viewBox="0 0 22 22"><circle cx="12" cy="5" r="3.500" fill="#7b83eb"/><circle cx="19" cy="6" r="2.500" fill="#5059c9"/><path d="M7 9h14v6c0 5-4 6-7 6s-7-2-7-6z" fill="#6d74dc"/><path d="M1 6h10v10H1z" fill="#4b53bc"/><path d="M3.500 8.500h5M6 8.500V14" stroke="#fff" stroke-width="1.500"/></svg></button>
      <button class="run" aria-label="Window"><svg viewBox="0 0 22 22"><path d="M1 3h20v16H1z" fill="#eee"/><path d="M3 7h9v10H3z" fill="#5b9385"/><path d="M13 7h5v10h-5z" fill="#ccc"/><path d="M18 5v6" stroke="#333" stroke-width="1.500"/></svg></button>
      <button class="run" aria-label="PowerChart"><svg viewBox="0 0 22 22"><use href="#p"/></svg></button>
    </div>
    <div class="tray">
      <svg viewBox="0 0 16 16"><rect x="1" y="1" width="14" height="14" rx="2" fill="#b5c4c0"/><rect x="4" y="3" width="8" height="10" fill="#43605c"/><path d="M8 4v5M8 11v1" stroke="#fff" stroke-width="1.500"/></svg>
      <svg viewBox="0 0 16 16"><path d="M8 0l6 4v8l-6 4-6-4V4z" fill="#b6dcee"/><circle cx="8" cy="8" r="4" fill="#2c7fb0"/><path d="M8 6v5" stroke="#fff" stroke-width="1.500"/></svg>
      <svg viewBox="0 0 16 16"><circle cx="7" cy="7" r="6" fill="#c6c6c0"/><circle cx="11.500" cy="11.500" r="4" fill="#d43434"/><path d="M10 10l3 3M13 10l-3 3" stroke="#fff"/></svg>
      <svg viewBox="0 0 16 16"><path d="M2 2h12v12H2z" fill="#7fbccb"/><path d="M2 11h12M6 2v12M6 6h8" stroke="#34717f"/></svg>
      <svg viewBox="0 0 16 16"><path d="M1 3h8v8H1z" fill="#4b53bc"/><path d="M8 5h7v9H6z" fill="#7b83eb"/><circle cx="12" cy="12" r="3.500" fill="#d43434"/><path d="M3 5h4M5 5v5" stroke="#fff"/></svg>
      <svg viewBox="0 0 16 16"><path d="M1 1h14v14H1z" fill="#f0cdf0"/><path d="M5 12V4l6 8V4" fill="none" stroke="#7b2384" stroke-width="2"/></svg>
      <svg viewBox="0 0 16 16"><path d="M1 1h14v14H1z" fill="#f2b233"/><circle cx="8" cy="8" r="4" fill="none" stroke="#fff" stroke-width="2"/></svg>
      <svg viewBox="0 0 16 16"><path d="M0 1h16v14H0z" fill="#d01818"/><text x="8" y="10" font-size="6" text-anchor="middle" fill="#fff" font-family="Roboto, sans-serif" font-weight="bold">DMC</text></svg>
      <svg viewBox="0 0 16 16"><circle cx="8" cy="8" r="6" fill="#222" stroke="#bbb" stroke-width="1.600"/><circle cx="7" cy="8" r="3" fill="none" stroke="#ddd" stroke-width="1.500"/></svg>
      <svg viewBox="0 0 16 16"><path d="M8 1l6 2v6c0 3-3 5-6 6-3-1-6-3-6-6V3z" fill="#1f8a3c"/><path d="M8 4v8M4 8h8" stroke="#0d3c1c" stroke-width="2"/></svg>
      <svg viewBox="0 0 16 16"><path d="M1 1h14v14H1z" fill="#2f80e4"/><path d="M3 5l2.500 6L8 6l2.500 5L13 5" fill="none" stroke="#fff" stroke-width="1.300"/></svg>
      <svg viewBox="0 0 16 16"><path d="M1 1h14v14H1z" fill="#8fd0ee"/><path d="M4 4h8v8H5M4 7h6M6 10h6" stroke="#1d5c90" fill="none" stroke-width="1.300"/></svg>
      <svg viewBox="0 0 16 16"><path d="M2 1h10l2 14H3z" fill="#2a80d8"/><path d="M4 7h8v4H4z" fill="#e8f4ff"/></svg>
      <svg viewBox="0 0 16 16"><path d="M5 3h10v8H5zM8 14h5M10 11v3M1 2h3v5H1zM2 7v7h4" fill="none" stroke="#ddd" stroke-width="1.200"/></svg>
      <svg viewBox="0 0 16 16"><path d="M1 6h3l3-3v10l-3-3H1zM9 6c1 1 1 3 0 4M11 4c2 2 2 6 0 8M13 3c3 3 3 7 0 10" fill="none" stroke="#ddd"/></svg>
      <div class="time">11:29 AM<br>5/4/2021</div>
    </div>
  </nav>
</div>

<div class="tile"><div class="avatar">AC</div><span>Cook, Amy</span></div>
<svg class="cursor" viewBox="0 0 12 19"><path d="M1 1v15l4-4 3 6 2-1-3-6h5z" fill="#fff" stroke="#222"/></svg>
</body>
</html>
```
FILE: styles.css
```css
* { box-sizing: border-box; }
body { margin: 0; height: 100vh; background: #000; display: flex; flex-direction: column; overflow: hidden; font: 11px/16px "Noto Sans", "Open Sans", sans-serif; color: #222; }
h1, h2, h3, h4, h5, p, ul { margin: 0; padding: 0; font-size: inherit; font-weight: inherit; }
ul { list-style: none; }
button { font: inherit; color: inherit; background: none; border: 0; padding: 0; margin: 0; display: flex; align-items: center; }
a { color: inherit; text-decoration: none; }
svg { flex: none; display: block; }
table { border-collapse: collapse; width: 100%; table-layout: fixed; }
th, td { padding: 0; font-weight: normal; text-align: left; }
.defs { position: absolute; width: 0; height: 0; }
.i8 { width: 8px; height: 8px; }
.i10 { width: 10px; height: 10px; }
.i12 { width: 12px; height: 12px; }
.i14 { width: 14px; height: 14px; }
.caret { width: 7px; height: 4px; }

.app { flex: 1; min-height: 0; margin: 0 5%; display: flex; flex-direction: column; background: #fff; }

/* title and menus */
.titlebar { height: 22px; background: #eaeaea; display: flex; align-items: center; padding-left: 2px; color: #333; }
.titlebar h1 { flex: 1; text-align: center; font-size: 13px; padding-left: 70px; }
.winbtns { display: flex; align-items: flex-start; height: 22px; gap: 8px; padding-right: 2px; }
.winbtns button { height: 17px; }
.winbtns .close { background: #bcbcbc; width: 40px; justify-content: center; }
.chrome { background: linear-gradient(#f4f8fa, #e3eaee 40%, #c4ced5); color: #4d565f; }
.menubar { height: 23px; display: flex; align-items: center; gap: 16px; padding: 2px 0 0 12px; background: linear-gradient(#fbfdfe, #eaf0f3); border-bottom: 1px solid #b3bcc2; }
.menubar .off { color: #9aa0a5; }
.bars { display: flex; flex-direction: column; }
.tb { display: flex; height: 25px; }
.tb:first-child { height: 24px; }
.grp { display: flex; align-items: center; gap: 7px; padding: 3px 15px 0 12px; border-right: 1px solid #aab4bb; border-bottom: 1px solid #b7c0c7; position: relative; white-space: nowrap; }
.tight { gap: 6px; }
.grp button { gap: 1px; }
.grp button svg:first-child { width: 15px; height: 14px; }
.grp .caret { margin: 0 1px 0 6px; }
.grp::before { content: ""; position: absolute; left: 7px; top: 7px; height: 13px; border-left: 2px dotted #6b747c; }
.grp::after { content: ""; position: absolute; right: 3px; bottom: 4px; width: 5px; height: 3px; border-top: 1px solid #667; border-bottom: 1px solid #667; }
.solo { margin-left: 1px; padding-right: 13px; }
.web { margin-left: 9px; }

.charts { height: 24px; background: linear-gradient(#2b3850, #3c4b61); border-bottom: 1px solid #26364a; display: flex; justify-content: space-between; padding-left: 3px; color: #e4e9f0; }
.charttab { margin-top: 2px; width: 161px; background: #2f8fcd; display: flex; align-items: center; justify-content: space-between; padding: 0 6px 0 3px; font-size: 13px; font-weight: 700; color: #fff; }
.charttab button { width: 10px; height: 11px; background: #14607f; font-size: 9px; line-height: 9px; justify-content: center; }
.chartnav { display: flex; align-items: center; gap: 6px; padding-right: 6px; }
.recent { gap: 2px; border-left: 1px solid #1e2a3c; padding-left: 3px; height: 20px; }
.recent .caret { margin: 0 0 0 6px; }
.chartnav input { width: 91px; height: 22px; margin-top: 1px; border: 0; border-radius: 0; background: #fff; font: inherit; padding: 0 4px; }
.chartnav input::placeholder { color: #b9b9b9; }
.chartnav > .caret { margin: 0 2px 0 1px; }

.banner { height: 65px; background: linear-gradient(#329ad6, #1f7fc0 50%, #1161a4); color: #fff; font-weight: 700; display: grid; grid-template-columns: 2fr 1fr 1fr 1fr 1fr; padding-left: 6px; border-bottom: 1px solid #4f92bd; white-space: nowrap; }
.banner p { line-height: 16px; height: 16px; }
.banner div { min-width: 0; padding-top: 1px; }

.main { flex: 1; min-height: 0; display: flex; }

/* side menu */
.side { width: 193px; flex: none; border-right: 5px solid #232d38; display: flex; flex-direction: column; min-height: 0; color: #e1e6e8; }
.side h2 { height: 23px; background: linear-gradient(#38454f, #2a3642); display: flex; align-items: center; justify-content: space-between; padding: 0 5px 0 12px; font-weight: 600; color: #fff; }
.sidebody { flex: 1; min-height: 0; display: flex; overflow: hidden; }
.side ul { flex: 1; background: #4a555e; }
.side li { height: 22px; padding: 2px 3px 0 9px; display: flex; align-items: center; justify-content: space-between; white-space: nowrap; position: relative; overflow: hidden; background: linear-gradient(#69747c, #69747c) bottom/156px 1px no-repeat; }
.side li:nth-child(even) { height: 23px; }
.side li.on { background: linear-gradient(#1c6a97, #0f5178); font-weight: 700; color: #fff; padding-left: 12px; }
.side li button { position: absolute; left: 135px; top: 4px; gap: 5px; }
.vbar { width: 16px; background: #f0f0f0; display: flex; flex-direction: column; align-items: center; }
.vbar svg, .hbar svg { width: 16px; height: 16px; padding: 2px; }
.vbar i { width: 14px; flex: 0 0 410px; background: #cdcdcd; }
.vbar svg:last-child { margin-top: auto; }
.hbar { height: 17px; background: #f0f0f0; display: flex; align-items: center; padding-right: 16px; border-bottom: 1px solid #888; }
.hbar i { height: 15px; width: 127px; background: #cdcdcd; }
.hbar svg:last-child { margin-left: auto; }

/* content */
.content { flex: 1; min-width: 0; display: flex; flex-direction: column; background: #fff; }
.viewbar { height: 24px; background: linear-gradient(#2d6a92, #0b4567); color: #edf3f6; display: flex; align-items: center; padding: 1px 6px 0 8px; gap: 13px; }
.viewbar h2 { font-weight: 700; color: #fff; margin-left: -2px; }
.viewbar .hm { margin-left: 4px; }
.viewacts { margin-left: auto; display: flex; gap: 17px; }
.viewacts button { gap: 2px; }
.tools { height: 32px; display: flex; align-items: center; gap: 5px; padding: 6px 0 0 12px; color: #222; }
.tools b { width: 1px; height: 15px; background: #aaa; }
.tools b.last { background: none; margin-left: 1px; }
.tools .zoom { width: 53px; padding-left: 5px; }
.tabs { height: 26px; display: flex; align-items: center; padding-left: 6px; border-bottom: 1px solid #c9c9c9; background: linear-gradient(#fff, #f6f6f6); }
.tab { width: 180px; height: 26px; display: flex; align-items: center; justify-content: space-between; padding: 4px 9px 0 18px; color: #1a5a8c; border-right: 1px solid #e2e2e2; }
.tab.on { border-bottom: 2px solid #4d9bd0; padding-top: 5px; color: #333; background: #fff; }
.addtab { margin-left: 19px; }
.tabtools { margin-left: auto; display: flex; align-items: center; padding-right: 8px; height: 26px; color: #666; }
.tabtools span { border-left: 1px solid #ddd; height: 24px; display: flex; align-items: center; padding: 0 7px 0 6px; }
.tabtools em { font-style: normal; background: #ddd; font-size: 8px; width: 14px; line-height: 16px; text-align: center; margin-left: 5px; }
.tabtools .inbox { padding-right: 6px; }
.tabtools .srch { padding-right: 9px; }
.flap { width: 50px; height: 22px; align-self: flex-end; }

.view { flex: 1; min-height: 0; margin-bottom: 10px; padding: 6px 7px 0 10px; display: flex; gap: 5px; overflow: hidden; font-family: Roboto, "Noto Sans", sans-serif; }
.cols { flex: 1; min-width: 0; display: grid; grid-template-columns: 492fr 506fr 492fr; gap: 4px; align-items: start; }
.col { display: flex; flex-direction: column; gap: 10px; min-width: 0; }
.mainbar { width: 15px; background: #f0f0f0; display: flex; flex-direction: column; }
.mainbar svg { width: 15px; height: 31px; padding: 8px 0 0; }
.mainbar svg:last-child { margin-top: auto; padding: 0 0 8px; }
.mainbar i { height: 198px; background: #c9c9c9; }

.panel { border: 1px solid #8f959d; border-top: 0; border-radius: 12px 0 0 0; background: #fff; }
.panel h3 { margin: 0 -1px; height: 26px; border-radius: 12px 0 0 0; background: linear-gradient(#aeb2ba, #858d97); border-top: 1px solid #9ba2aa; border-bottom: 1px solid #787f88; color: #fff; font: bold 12px/22px "DejaVu Sans Condensed", "DejaVu Sans", sans-serif; padding: 0 6px 2px 11px; display: flex; align-items: center; white-space: pre; }
.panel h3 i { font-style: normal; font-weight: normal; }
.ctl { margin-left: auto; display: flex; gap: 4px; align-items: center; }
.mn { width: 18px; height: 12px; }
.pl { margin-left: 8px; }
.dn { width: 10px; height: 6px; margin-left: 4px; }
.sub { line-height: 15px; background: #e5e8e9; border-bottom: 1px solid #999fa5; padding-left: 17px; color: #666; }
.sub.big { line-height: 18px; display: flex; align-items: center; padding-left: 18px; }
.body { padding: 6px 6px 5px; }
.probs { padding-top: 7px; }
.qbody { padding-bottom: 2px; }
.info th { width: 239px; }
.info { color: #222; }
.info th, .info td { line-height: 15px; border-top: 1px solid #eee; }
.info th { padding-left: 4px; }
.sec { background: #e0e1e3; border-bottom: 1px solid #a9adb1; line-height: 16px; padding-left: 3px; display: flex; align-items: center; gap: 3px; color: #4c5258; }
.info + .sec { margin-top: 2px; }
.info + .sec.tall { line-height: 18px; margin-top: 0; }
.alrt th { width: 231px; }
.alrt th, .alrt td { font-weight: bold; color: #c41e4a; line-height: 15px; }
.class { background: #e3e4e5; line-height: 15px; padding-left: 18px; color: #8a8a8a; }
.class span { color: #666; }
.addbox { border: 1px solid #999; padding: 7px 6px 6px 5px; color: #888; }
.addbox label { display: block; }
.addbox label span { color: #222; }
.field { display: flex; border-bottom: 2px solid #999; padding-bottom: 3px; position: relative; }
.field svg { position: absolute; left: 4px; top: 2px; }
.field input { width: 91%; height: 16px; border: 1px solid #ddd; border-top: 2px solid #777; border-left: 2px solid #777; border-radius: 0; padding: 0 0 0 16px; font: inherit; }
.phead { margin-top: 13px; height: 20px; display: flex; background: #f6f6f7; border: 1px solid #e8e8ea; border-bottom: 0; font-size: 9px; line-height: 17px; color: #999; }
.phead span:first-child { width: 66px; padding-left: 18px; border-right: 1px solid #e2e2e2; }
.phead span + span { padding-left: 2px; }
.bar { background: #dddee0; line-height: 19px; padding-left: 4px; display: flex; align-items: center; color: #444a50; white-space: pre; }
.bar small { font-size: 10px; }
.bar svg { margin-right: 6px; }
.hist { border-bottom: 1px solid #a9adb1; margin-bottom: -1px; }
.hist label { margin-left: auto; padding-right: 11px; display: flex; align-items: center; gap: 5px; }
.hist input { appearance: none; width: 10px; height: 10px; margin: 0; border: 1px solid #555; background: #fff linear-gradient(135deg, transparent 30%, #333 30% 60%, transparent 60%) center/5px 5px no-repeat; }
.prow { height: 19px; display: flex; align-items: center; padding-left: 68px; border-bottom: 1px solid #f1f1f1; border-right: 2px dotted #ddd; margin-right: 4px; position: relative; }
.prow .nt { width: 14px; height: 12px; margin: 0 13px 0 auto; }
.dxrow { padding-left: 2px; height: 21px; gap: 52px; }
.hatch { height: 6px; margin-bottom: 3px; background: repeating-linear-gradient(45deg, #c6c6c6 0 1px, #e6e6e6 1px 3px); }

.grid { border: 1px solid #e6e6e6; }
.grid thead th { background: #f7f7f7; border-bottom: 1px solid #ddd; font-size: 9px; line-height: 15px; text-align: center; color: #999; }
.grid td { text-align: center; vertical-align: top; color: #222; }
.grid .ln { border-left: 1px solid #ddd; }
.grid tbody th { vertical-align: top; color: #3f5d8c; padding-left: 4px; }
.grid tbody th, .grid tbody td { line-height: 15px; padding-top: 3px; padding-bottom: 2px; }
.vit tbody tr:nth-child(n+6):not(:last-child) > * { padding-bottom: 1px; }
.grid tbody tr:nth-child(even) { background: #f3f3f5; }
.grid td svg { display: inline-block; }
.grid time { display: block; font-size: 8px; line-height: 15px; color: #858585; padding-top: 1px; margin-bottom: -1px; }
.grid small { font-size: 9px; line-height: 9px; color: #999; }
.ar { width: 8px; height: 10px; margin-right: 3px; vertical-align: 0; }
.dl { width: 9px; height: 6px; }
.hi { color: #ef7d28; }
.lo { color: #2d62c4; }
.crit { color: #c8102e; font-weight: bold; }
.c1, .c2 { width: 94px; }
.c3 { width: 8px; }
.c4 { width: 108px; }
.meas thead th { line-height: 11px; }
.meas tbody th, .meas tbody td { padding-top: 0; padding-bottom: 0; height: 31px; }
.meas tbody th { padding-left: 1px; }

.qm { border: 1px solid #e4e4e4; color: #222; }
.filter { height: 27px; padding: 1px 0 0 4px; display: flex; align-items: center; gap: 11px; }
.filter select { width: 47px; height: 18px; font: inherit; border: 1px solid #555; border-radius: 0; background: #fff; color: #333; padding: 0; }
.blue { background: #cfdcef; border-bottom: 1px solid #a9bbd4; line-height: 15px; padding-left: 3px; display: flex; align-items: center; gap: 2px; color: #44505c; }
.qsec { padding: 5px 6px 6px; }
.qsec h5 { border-top: 1px solid #eee; border-bottom: 1px solid #999; line-height: 14px; display: flex; align-items: center; gap: 3px; padding-left: 4px; color: #444a50; margin-bottom: 1px; }
.qsec .ck { margin-left: 6px; }
.qsec p { line-height: 15px; border-bottom: 1px solid #ececec; padding-left: 4px; }
.qsec p:nth-child(4n) { line-height: 16px; }
.qsec .act { padding-left: 13px; }
.qsec a { color: #2f5f96; }
.dim, .qsec .dim { color: #8f8f8f; }
.two { border-top: 1px solid #aaa; }
.art { border: 1px solid #999; font-size: 10px; }
.art h4 { line-height: 20px; background: #e3e3e3; border-bottom: 1px solid #999; padding-left: 18px; color: #666; }
.art p { line-height: 25px; padding-left: 9px; color: #888; }
.none { line-height: 24px; padding-left: 11px; color: #888; }
.otabs { display: flex; background: #e5e8e9; padding: 3px 5px 0; }
.otabs button { height: 24px; padding: 0 9px; border: 1px solid #888; border-left: 0; background: #f4f5f6; border-radius: 0 2px 0 0; }
.otabs .on { background: #4a4f55; color: #fff; }

/* status and taskbar */
.status { height: 25px; background: #f0f0f0; border-top: 1px solid #d2d2d2; display: flex; justify-content: flex-end; padding: 2px 3px 0 0; gap: 4px; color: #333; }
.status span { border-left: 1px solid #ddd; height: 16px; padding-left: 4px; }
.taskbar { height: 30px; background: #060e18; display: flex; justify-content: space-between; color: #e8e8e8; }
.apps { display: flex; gap: 1px; padding-left: 1px; }
.apps button { width: 44px; height: 30px; justify-content: center; border-bottom: 2px solid transparent; padding-bottom: 6px; }
.apps svg { width: 22px; height: 20px; }
.apps .run { border-bottom-color: #76b9e8; }
.apps .cur { background: #333c46; }
.tray { display: flex; align-items: center; gap: 6px; padding-right: 13px; }
.tray svg { width: 16px; height: 16px; margin-bottom: 4px; }
.time { line-height: 17px; margin: -4px 0 0 8px; }

.tile { height: 10vh; width: 200px; align-self: flex-end; background: #191919; color: #fff; position: relative; display: flex; align-items: center; justify-content: center; font-size: 12px; }
.avatar { width: 60px; height: 60px; border-radius: 50%; background: #dcd8ec; color: #27234f; font: 23px/60px "Noto Sans", sans-serif; text-align: center; }
.tile span { position: absolute; left: 12px; bottom: 3px; }
.cursor { position: absolute; left: 294px; top: 438px; width: 12px; height: 19px; }
```
